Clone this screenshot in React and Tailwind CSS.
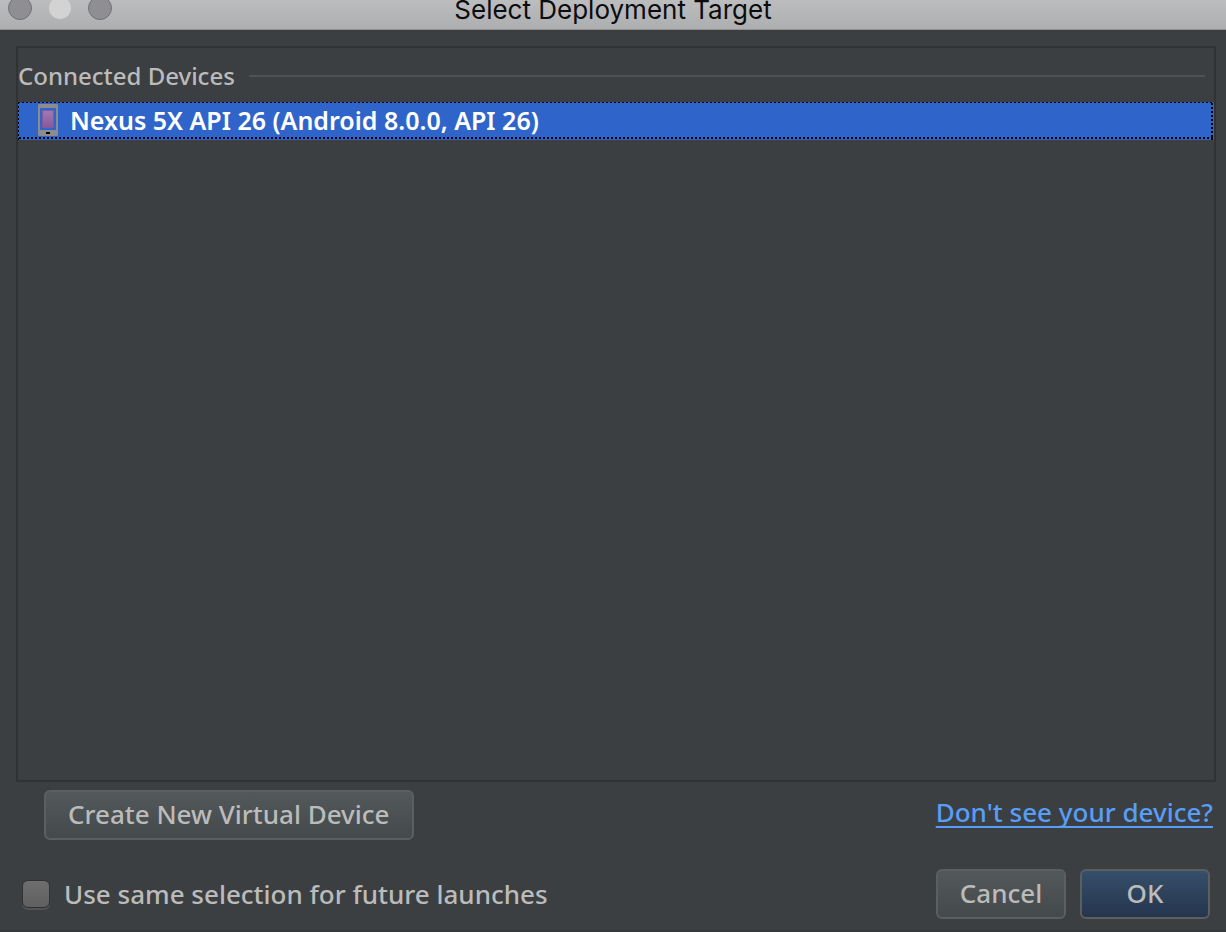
import { useState } from "react";

const devices = ["Nexus 5X API 26 (Android 8.0.0, API 26)"];

const buttonBase =
  "h-[50px] rounded-md border-2 border-[#5c5f60] bg-linear-to-b pb-0.5 text-[26px] leading-8 font-medium text-[#bbbbbb]";

function WindowControls() {
  return (
    <svg className="absolute -top-1 left-2 h-6 w-[104px]" viewBox="0 0 104 24" aria-hidden="true">
      <circle cx="12" cy="12" r="11.5" fill="#8f8e93" stroke="#717075" />
      <circle cx="52" cy="12" r="11" fill="#d3d3d3" />
      <circle cx="92" cy="12" r="11.5" fill="#8f8e93" stroke="#717075" />
    </svg>
  );
}

function PhoneIcon() {
  return (
    <svg className="h-8 w-5 shrink-0" viewBox="0 0 20 32" aria-hidden="true">
      <defs>
        <linearGradient id="screen" x1="0" y1="0" x2="0" y2="1">
          <stop offset="0" stopColor="#9f78b0" />
          <stop offset="1" stopColor="#885a9c" />
        </linearGradient>
      </defs>
      <path
        fillRule="evenodd"
        fill="#8c8c8c"
        d="M1 0H19L20 1V31L19 32H1L0 31V1ZM2 4V26H18V4Z"
      />
      <rect x="4" y="6" width="12" height="18" fill="#805a9f" />
      <rect x="5" y="7" width="10" height="16" fill="url(#screen)" />
      <rect x="8" y="28" width="4" height="2" fill="#000" />
    </svg>
  );
}

function FocusDots() {
  return (
    <span aria-hidden="true">
      <span className="absolute inset-x-0 top-0 h-px bg-[repeating-linear-gradient(to_right,#000_0_2px,transparent_2px_4px)]" />
      <span className="absolute inset-x-0 bottom-px h-0.5 bg-[repeating-linear-gradient(to_right,transparent_0_1px,#000_1px_3px,transparent_3px_4px)]" />
      <span className="absolute inset-y-0 left-0 w-px bg-[repeating-linear-gradient(to_bottom,#000_0_2px,transparent_2px_4px)]" />
      <span className="absolute inset-y-0 right-px w-0.5 bg-[repeating-linear-gradient(to_bottom,transparent_0_1px,#000_1px_3px,transparent_3px_4px)]" />
    </span>
  );
}

export default function App() {
  const [selected, setSelected] = useState(0);
  const [remember, setRemember] = useState(false);

  return (
    <div className="flex min-h-screen flex-col bg-[#3c3f41] font-['Noto_Sans',sans-serif] text-[#bbbbbb]">
      <header className="relative flex h-[30px] items-start justify-center border-b border-[#8f9091] bg-linear-to-b from-[#bcbdbf] to-[#adaeb0]">
        <WindowControls />
        <h1 className="font-['Inter',sans-serif] text-[26px] leading-5 text-[#0c0c0c]">
          Select Deployment Target
        </h1>
      </header>

      <main className="flex flex-1 flex-col pt-4 pr-2.5 pl-4">
        <section className="flex-1 border-2 border-[#323232] pt-1">
          <div className="mb-0.5 flex h-12 items-center gap-3.5 pr-[9px]">
            <h2 className="text-2xl font-medium">Connected Devices</h2>
            <div className="h-0.5 flex-1 bg-[#515151]" />
          </div>
          <ul>
            {devices.map((device, index) => (
              <li key={device}>
                <button
                  type="button"
                  onClick={() => setSelected(index)}
                  aria-pressed={selected === index}
                  className="relative flex h-[38px] w-full items-center gap-3 bg-[#2f65ca] pb-0.5 pl-5 text-left text-[25px] leading-8 font-semibold text-white outline-none"
                >
                  <PhoneIcon />
                  {device}
                  {selected === index && <FocusDots />}
                </button>
              </li>
            ))}
          </ul>
        </section>

        <div className="flex items-start justify-between pt-2 pr-[3px] pl-7">
          <button type="button" className={`${buttonBase} from-[#53585a] to-[#44494b] px-[22px]`}>
            Create New Virtual Device
          </button>
          <a
            href="#help"
            className="mt-1 text-[26px] leading-9 font-medium text-[#589df6] underline decoration-2 underline-offset-4 [text-decoration-skip-ink:none]"
          >
            Don't see your device?
          </a>
        </div>
      </main>

      <footer className="flex items-center justify-between border-b-2 border-[#35383a] pt-[29px] pr-4 pb-[11px] pl-[22px]">
        <label className="flex items-center gap-3.5 text-[26px] leading-9 font-medium">
          <input
            type="checkbox"
            checked={remember}
            onChange={(event) => setRemember(event.target.checked)}
            className="size-7 appearance-none rounded-md border border-[#303234] bg-linear-to-b from-[#6e6e6e] to-[#606060] shadow-[0_2px_0_#515354] checked:from-[#8a8a8a] checked:to-[#7a7a7a]"
          />
          Use same selection for future launches
        </label>
        <div className="flex gap-3.5">
          <button type="button" className={`${buttonBase} w-[130px] from-[#53585a] to-[#44494b]`}>
            Cancel
          </button>
          <button type="button" className={`${buttonBase} w-[130px] from-[#364f6b] to-[#25354d]`}>
            OK
          </button>
        </div>
      </footer>
    </div>
  );
}
